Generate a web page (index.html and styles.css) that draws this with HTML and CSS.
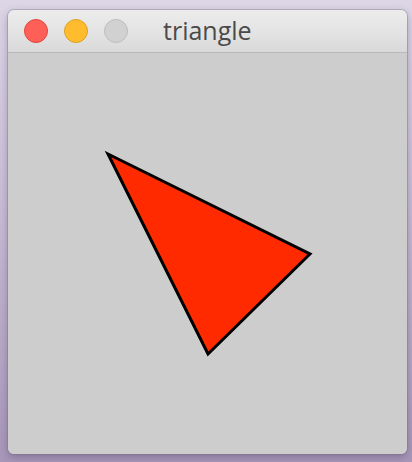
FILE: index.html
```html
<!DOCTYPE html>
<html>
<head>
<meta charset="utf-8">
<link rel="stylesheet" href="styles.css">
</head>
<body>
<div class="window">
  <div class="titlebar">
    <div class="lights">
      <span class="light red"></span>
      <span class="light yellow"></span>
      <span class="light grey"></span>
    </div>
    <div class="title">triangle</div>
  </div>
  <div class="content">
    <svg class="canvas" width="399" height="400" viewBox="0 0 399 400">
      <polygon points="100,101 302,201 200,301" fill="#ff2a00" stroke="#000" stroke-width="3" stroke-linejoin="miter"/>
    </svg>
  </div>
</div>
</body>
</html>
```

FILE: styles.css
```css
html, body {
  margin: 0;
  padding: 0;
}
body {
  width: 412px;
  height: 462px;
  overflow: hidden;
  background: linear-gradient(180deg, #dcd6e6 0%, #cbc0d8 40%, #a897b8 100%);
  font-family: "Liberation Sans", Arial, sans-serif;
  padding-top: 10px;
  padding-left: 8px;
  box-sizing: border-box;
}
.window {
  width: 399px;
  height: 444px;
  border-radius: 6px;
  overflow: hidden;
  display: flex;
  flex-direction: column;
  box-shadow: 0 0 0 1px rgba(120, 110, 130, 0.35), 0 3px 8px rgba(60, 40, 80, 0.35);
  background: #cdcdcd;
}
.titlebar {
  height: 42px;
  flex: 0 0 42px;
  display: flex;
  align-items: center;
  background: linear-gradient(180deg, #ececec 0%, #e2e2e2 60%, #d9d9d9 100%);
  border-bottom: 1px solid #b9b9b9;
  position: relative;
}
.lights {
  display: flex;
  gap: 16px;
  padding-left: 16px;
}
.light {
  width: 24px;
  height: 24px;
  border-radius: 50%;
  box-sizing: border-box;
}
.red {
  background: #fe5f57;
  border: 1px solid #e2463f;
}
.yellow {
  background: #febc2e;
  border: 1px solid #dea123;
}
.grey {
  background: #d1d1d1;
  border: 1px solid #bdbdbd;
}
.title {
  margin-left: 35px;
  font-family: "Open Sans", "Liberation Sans", sans-serif;
  font-size: 25px;
  color: #4a4a4a;
  line-height: 1;
  padding-bottom: 2px;
}
.content {
  flex: 1;
  background: #cdcdcd;
}
.canvas {
  display: block;
}
```
